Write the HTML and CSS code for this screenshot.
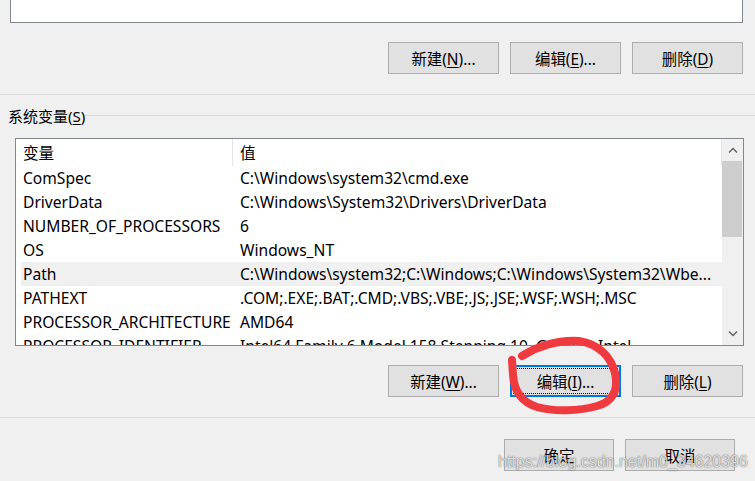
FILE: index.html
```html
<!DOCTYPE html>
<html lang="zh-CN">
  <head>
    <meta charset="UTF-8" />
    <meta name="viewport" content="width=device-width, initial-scale=1.0" />
    <title>环境变量</title>
    <link rel="stylesheet" href="styles.css">
  </head>
  <body>
    <div class="user-list"></div>

    <div class="btn-row">
      <button class="btn">新建(<u>N</u>)...</button>
      <button class="btn">编辑(<u>E</u>)...</button>
      <button class="btn">删除(<u>D</u>)</button>
    </div>

    <div class="sep"></div>

    <div class="group-title">
      <span>系统变量(<u>S</u>)</span>
      <div class="group-line"></div>
    </div>

    <div class="listbox">
      <div class="table">
        <div class="row head">
          <span class="cell">变量</span>
          <span class="cell">值</span>
        </div>
        <div class="row"><span class="cell">ComSpec</span><span class="cell">C:\Windows\system32\cmd.exe</span></div>
        <div class="row"><span class="cell">DriverData</span><span class="cell">C:\Windows\System32\Drivers\DriverData</span></div>
        <div class="row"><span class="cell">NUMBER_OF_PROCESSORS</span><span class="cell">6</span></div>
        <div class="row"><span class="cell">OS</span><span class="cell">Windows_NT</span></div>
        <div class="row selected"><span class="cell">Path</span><span class="cell">C:\Windows\system32;C:\Windows;C:\Windows\System32\Wbe...</span></div>
        <div class="row"><span class="cell">PATHEXT</span><span class="cell">.COM;.EXE;.BAT;.CMD;.VBS;.VBE;.JS;.JSE;.WSF;.WSH;.MSC</span></div>
        <div class="row"><span class="cell">PROCESSOR_ARCHITECTURE</span><span class="cell">AMD64</span></div>
        <div class="row"><span class="cell">PROCESSOR_IDENTIFIER</span><span class="cell">Intel64 Family 6 Model 158 Stepping 10, GenuineIntel</span></div>
      </div>
      <div class="scrollbar">
        <div class="arrow">
          <svg width="10" height="6" viewBox="0 0 10 6"><polyline points="1,5.5 5,1.5 9,5.5" fill="none" stroke="#606060" stroke-width="1.4"/></svg>
        </div>
        <div class="track">
          <div class="thumb"></div>
        </div>
        <div class="arrow">
          <svg width="10" height="6" viewBox="0 0 10 6"><polyline points="1,0.5 5,4.5 9,0.5" fill="none" stroke="#606060" stroke-width="1.4"/></svg>
        </div>
      </div>
    </div>

    <div class="btn-row">
      <button class="btn">新建(<u>W</u>)...</button>
      <button class="btn focused">编辑(<u>I</u>)...</button>
      <button class="btn">删除(<u>L</u>)</button>
    </div>

    <div class="sep low"></div>

    <div class="btn-row dialog">
      <button class="btn">确定</button>
      <button class="btn">取消</button>
    </div>

    <!-- hand drawn mark round the edit button -->
    <svg class="scribble" width="755" height="481" viewBox="0 0 755 481">
      <path d="M 522 356 C 540 345, 560 340, 579 341 C 599 344, 611 357, 615 373 C 619 391, 612 402, 597 406 C 579 411, 554 412, 537 407 C 521 402, 514 390, 513 375 L 512 360" fill="none" stroke="#ef3b3f" stroke-width="8" stroke-linecap="round" stroke-linejoin="round"/>
    </svg>

    <div class="watermark">https://blog.csdn.net/m0_34620396</div>
  </body>
</html>
```

FILE: styles.css
```css
body {
  margin: 0;
  width: 755px;
  height: 481px;
  overflow: hidden;
  position: relative;
  background: #f0f0f0;
  font-family: "Noto Sans", "Noto Sans CJK SC", sans-serif;
  font-size: 15px;
  color: #000;
}

u {
  text-decoration-thickness: 1px;
  text-underline-offset: 2px;
}

.user-list {
  height: 22px;
  margin: 0 12px 0 10px;
  background: #fff;
  border: 1px solid #828790;
  border-top: none;
}

.btn-row {
  display: flex;
  justify-content: flex-end;
  gap: 11px;
  margin-top: 19px;
  padding-right: 12px;
}

.btn {
  box-sizing: border-box;
  width: 111px;
  height: 32px;
  background: #e1e1e1;
  border: 1px solid #adadad;
  border-radius: 0;
  font-family: inherit;
  font-size: 15.4px;
  color: #000;
  padding: 0;
}

.btn.focused {
  border: 2px solid #0078d7;
  outline: 1px dotted #000;
  outline-offset: -4px;
}

.dialog {
  margin-top: 21px;
  padding-right: 20px;
}

.dialog .btn {
  width: 110px;
}

.sep {
  height: 1px;
  background: #dadada;
  margin-top: 20px;
}

.sep.low {
  margin-top: 20px;
}

.group-title {
  display: flex;
  align-items: center;
  height: 20px;
  margin-top: 10px;
  padding-left: 8px;
}

.group-line {
  flex: 1;
  height: 1px;
  background: #dcdcdc;
}

.listbox {
  display: flex;
  height: 206px;
  margin: 13px 11px 0 15px;
  background: #fff;
  border: 1px solid #828790;
  font-size: 15.6px;
}

.table {
  flex: 1;
  overflow: hidden;
  padding-left: 5px;
}

.row {
  display: grid;
  grid-template-columns: 212px 1fr;
  align-items: center;
  height: 24px;
  white-space: nowrap;
}

.row.head {
  height: 27px;
  align-items: stretch;
  border-right: 1px solid #e5e5e5;
}

.row.head .cell {
  display: flex;
  align-items: center;
}

.row.head .cell:first-child {
  border-right: 1px solid #e5e5e5;
}

.row.selected {
  background: #f0f0f0;
}

.cell {
  overflow: hidden;
  padding-left: 2px;
}

.cell + .cell {
  padding-left: 7px;
}

.scrollbar {
  width: 21px;
  display: flex;
  flex-direction: column;
  background: #f0f0f0;
}

.arrow {
  height: 22px;
  display: flex;
  justify-content: center;
  align-items: center;
}

.track {
  flex: 1;
}

.thumb {
  height: 76px;
  margin-right: 1px;
  background: #cdcdcd;
}

.scribble {
  position: absolute;
  top: 0;
  left: 0;
  pointer-events: none;
}

.watermark {
  position: absolute;
  left: 498px;
  top: 451px;
  font-family: "Liberation Sans", Arial, sans-serif;
  font-size: 16px;
  line-height: 22px;
  color: rgba(255, 255, 255, 0.8);
  text-shadow: 0 0 1px rgba(0, 0, 0, 0.6), 0 0 2px rgba(0, 0, 0, 0.25);
  white-space: nowrap;
}
```
